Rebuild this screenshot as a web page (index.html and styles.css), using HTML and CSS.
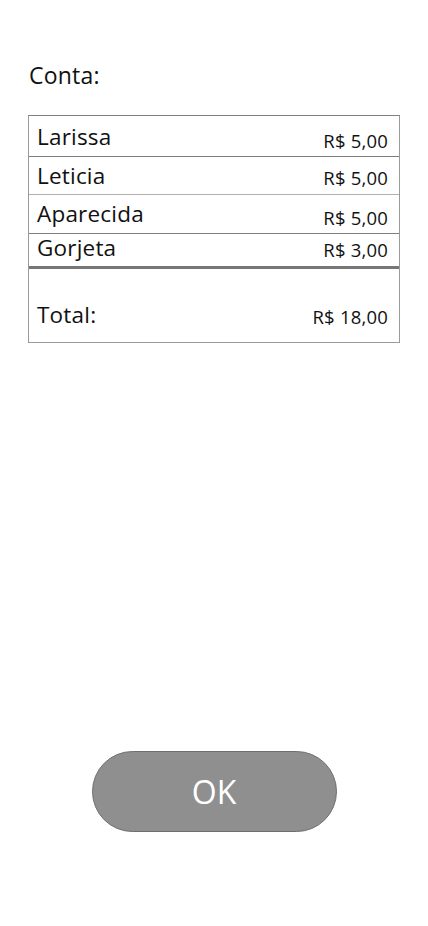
FILE: index.html
```html
<!DOCTYPE html>
<html lang="pt-BR">
<head>
<meta charset="utf-8">
<title>Conta</title>
<link rel="stylesheet" href="styles.css">
</head>
<body>
<main class="page">
  <h1 class="title">Conta:</h1>
  <section class="bill">
    <div class="row r1"><span class="name">Larissa</span><span class="amount">R$ 5,00</span></div>
    <div class="row r2"><span class="name">Leticia</span><span class="amount">R$ 5,00</span></div>
    <div class="row r3"><span class="name">Aparecida</span><span class="amount">R$ 5,00</span></div>
    <div class="row r4"><span class="name">Gorjeta</span><span class="amount">R$ 3,00</span></div>
    <div class="row total"><span class="name">Total:</span><span class="amount">R$ 18,00</span></div>
  </section>
  <div class="actions">
    <button class="ok">OK</button>
  </div>
</main>
</body>
</html>
```
FILE: styles.css
```css
* { box-sizing: border-box; }
html, body { margin: 0; padding: 0; background: #fff; }
body {
  width: 428px;
  height: 926px;
  font-family: "Open Sans", "Noto Sans", sans-serif;
  color: #111;
}
.page {
  padding: 58px 29px 0 28px;
}
.title {
  margin: 0 0 0 1px;
  font-size: 23px;
  font-weight: 400;
  line-height: 34px;
  height: 57px;
  letter-spacing: 0.2px;
}
.bill {
  width: 372px;
  border: 1px solid #9a9a9a;
  border-top-color: #808080;
}
.row {
  display: flex;
  justify-content: space-between;
  align-items: center;
  padding: 0 11px 0 8px;
  border-bottom: 1px solid #7e7e7e;
}
.name {
  font-size: 22.5px;
  line-height: 30px;
  letter-spacing: 0.2px;
}
.amount {
  font-size: 18.5px;
  line-height: 24px;
  margin-top: 8px;
  letter-spacing: 0.2px;
}
.r1 { height: 41px; }
.r1 .name { margin-top: 1px; }
.r1 .amount { margin-top: 10px; }
.r2 { height: 38px; border-bottom-color: #b0b0b0; }
.r2 .amount { margin-top: 5px; }
.r3 { height: 39px; }
.r4 { height: 35px; border-bottom: 3px solid #777; }
.r4 .name { margin-top: -4px; }
.r4 .amount { margin-top: 0; }
.total {
  height: 73px;
  border-bottom: none;
  align-items: flex-end;
  padding-bottom: 12px;
}
.total .amount { margin-top: 0; margin-bottom: 1px; }
.actions {
  display: flex;
  justify-content: center;
  margin-top: 408px;
  padding-left: 1px;
}
.ok {
  width: 245px;
  height: 81px;
  border-radius: 41px;
  background: #8f8f8f;
  border: 1px solid #6e6e6e;
  color: #fff;
  font-family: "Open Sans", "Noto Sans", sans-serif;
  font-size: 32px;
  font-weight: 400;
  padding: 0;
}
```
